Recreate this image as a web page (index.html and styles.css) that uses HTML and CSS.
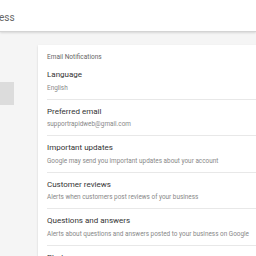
FILE: index.html
```html
<!DOCTYPE html>
<html lang="en">
<head>
    <meta charset="UTF-8">
    <meta name="viewport" content="width=device-width, initial-scale=1.0">
    <title>Settings</title>
    <link rel="stylesheet" href="styles.css">
</head>
<body>
    <header class="topbar">
        <span class="brand">ess</span>
    </header>

    <div class="main">
        <nav class="sidebar">
            <div class="nav-item active"></div>
        </nav>

        <section class="card">
            <h2 class="card-title">Email Notifications</h2>
            <div class="row first">
                <p class="row-title">Language</p>
                <p class="row-sub">English</p>
            </div>
            <div class="row">
                <p class="row-title">Preferred email</p>
                <p class="row-sub">supportrapidweb@gmail.com</p>
            </div>
            <div class="row">
                <p class="row-title">Important updates</p>
                <p class="row-sub">Google may send you important updates about your account</p>
            </div>
            <div class="row">
                <p class="row-title">Customer reviews</p>
                <p class="row-sub">Alerts when customers post reviews of your business</p>
            </div>
            <div class="row">
                <p class="row-title">Questions and answers</p>
                <p class="row-sub">Alerts about questions and answers posted to your business on Google</p>
            </div>
            <div class="row">
                <p class="row-title">Photos</p>
                <p class="row-sub">Alerts about photos added to your business</p>
            </div>
        </section>
    </div>
</body>
</html>
```

FILE: styles.css
```css
body {
    margin: 0;
    padding: 0;
    background-color: #f5f5f5;
    font-family: Roboto, "Liberation Sans", Arial, sans-serif;
    overflow: hidden;
    height: 256px;
}

.topbar {
    height: 31px;
    background-color: #fff;
    border-bottom: 1px solid #d4d4d4;
    box-shadow: 0 1px 2px rgba(0, 0, 0, 0.12);
    display: flex;
    align-items: center;
    position: relative;
    z-index: 1;
}

.brand {
    font-size: 10px;
    color: #666;
    margin-left: -1px;
    padding-top: 3px;
}

.main {
    display: flex;
    padding-top: 13px;
}

.sidebar {
    width: 38px;
    flex-shrink: 0;
    padding-top: 37px;
}

.nav-item {
    width: 14px;
    height: 23px;
}

.nav-item.active {
    background-color: #dcdcdc;
}

.card {
    flex: 1;
    min-width: 240px;
    background-color: #fff;
    box-shadow: 0 1px 2px rgba(0, 0, 0, 0.15);
    padding: 7px 0 0 9px;
}

.card-title {
    margin: 0;
    font-size: 6.5px;
    line-height: 10px;
    font-weight: normal;
    color: #666;
}

.row {
    border-top: 1px solid #e8e8e8;
    padding: 7px 0 6px;
}

.row.first {
    border-top: none;
    padding-top: 8px;
}

.row-title {
    margin: 0;
    font-size: 8px;
    line-height: 10px;
    color: #333;
}

.row-sub {
    margin: 2.5px 0 0;
    font-size: 6.4px;
    line-height: 10px;
    color: #888;
}
```
